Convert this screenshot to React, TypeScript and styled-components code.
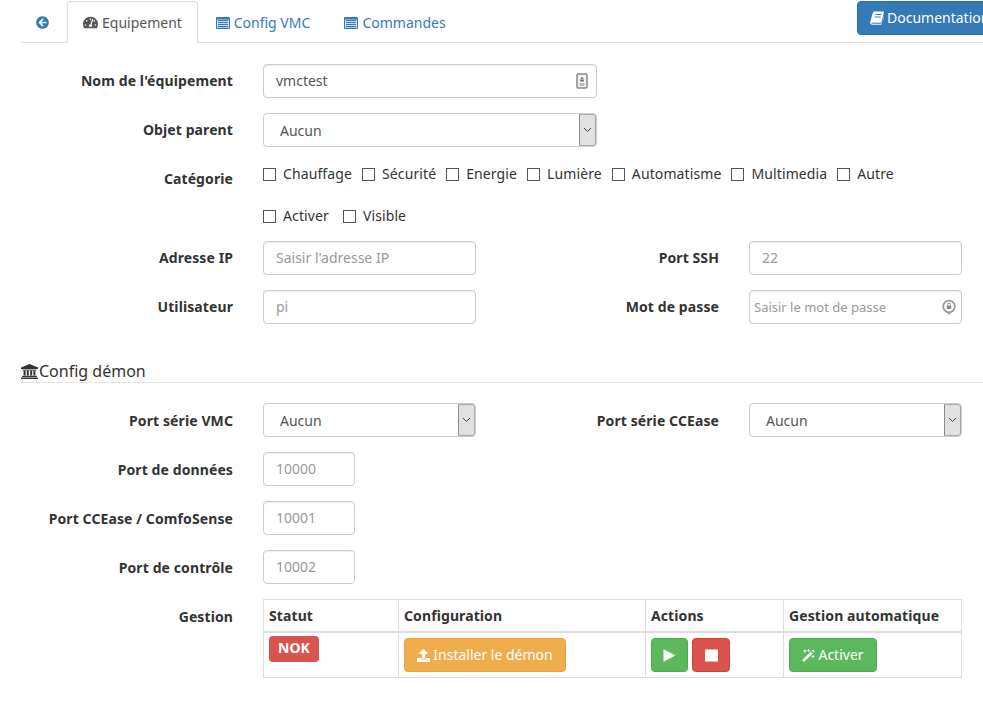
import React from "react";
import styled, { createGlobalStyle } from "styled-components";
import { FaArrowCircleLeft, FaTachometerAlt, FaUpload } from "react-icons/fa";

const Global = createGlobalStyle`
  html, body { margin: 0; padding: 0; background: #fff; overflow: hidden; height: 708px; }
  body { font-family: "Noto Sans", "Liberation Sans", sans-serif; font-size: 14px; color: #333; line-height: 20px; }
  * { box-sizing: border-box; }
`;

const Page = styled.div`
  width: 983px;
  height: 708px;
  padding-left: 21px;
  overflow: hidden;
`;
const TabBar = styled.div`
  display: flex;
  height: 43px;
  border-bottom: 1px solid #ddd;
  width: 962px;
  flex-wrap: nowrap;
`;
const Tabs = styled.div`
  display: flex;
  width: 836px;
  flex-shrink: 0;
  padding-top: 1px;
`;
const Tab = styled.a<{ $active?: boolean; $w: number }>`
  width: ${p => p.$w}px;
  height: 42px;
  display: flex;
  align-items: center;
  justify-content: center;
  gap: 4px;
  padding-top: 1px;
  color: ${p => (p.$active ? "#555" : "#337ab7")};
  border: 1px solid ${p => (p.$active ? "#ddd" : "transparent")};
  border-bottom-color: ${p => (p.$active ? "#fff" : "transparent")};
  border-radius: 4px 4px 0 0;
  background: ${p => (p.$active ? "#fff" : "transparent")};
  flex-shrink: 0;
  svg { flex-shrink: 0; }
`;
const BackTab = styled(Tab)`
  padding-right: 3px;
`;
const DocButton = styled.a`
  display: flex;
  align-items: center;
  gap: 3px;
  flex-shrink: 0;
  height: 34px;
  margin-top: 1px;
  padding: 0 12px;
  width: 150px;
  white-space: nowrap;
  background: #337ab7;
  border: 1px solid #2e6da4;
  color: #fff;
  border-radius: 4px;
`;
const Form = styled.div`
  display: flex;
  flex-direction: column;
  padding-top: 21px;
  margin-left: -21px;
`;
const Row = styled.div<{ $mb?: number }>`
  display: flex;
  align-items: flex-start;
  margin-bottom: ${p => p.$mb ?? 15}px;
`;
const Label = styled.label<{ $second?: boolean; $pt?: number }>`
  flex-shrink: 0;
  width: ${p => (p.$second ? 243 : 233)}px;
  margin-right: 30px;
  padding-top: ${p => p.$pt ?? 7}px;
  text-align: right;
  font-weight: 700;
  letter-spacing: 0.1px;
  white-space: nowrap;
`;
const Field = styled.div<{ $w: number }>`
  position: relative;
  flex-shrink: 0;
  width: ${p => p.$w}px;
  height: 34px;
  padding: 0 12px;
  display: flex;
  align-items: center;
  border: 1px solid #ccc;
  border-radius: 4px;
  color: #555;
  background: #fff;
  box-shadow: inset 0 1px 1px rgba(0, 0, 0, 0.075);
`;
const Placeholder = styled.span<{ $small?: boolean }>`
  color: #999;
  font-size: ${p => (p.$small ? 13 : 14)}px;
  margin-left: ${p => (p.$small ? -8 : 0)}px;
  white-space: nowrap;
`;
const FieldIcon = styled.svg<{ $r: number; $t: number }>`
  position: absolute;
  right: ${p => p.$r}px;
  top: ${p => p.$t}px;
`;
const SelectBox = styled.div<{ $w: number }>`
  flex-shrink: 0;
  width: ${p => p.$w}px;
  height: 34px;
  display: flex;
  align-items: stretch;
  border: 1px solid #ccc;
  border-radius: 4px;
  color: #555;
  background: #fff;
  overflow: hidden;
`;
const SelectText = styled.span`
  flex: 1;
  padding: 7px 0 0 16px;
`;
const SelectArrow = styled.span`
  width: 17px;
  flex-shrink: 0;
  display: flex;
  align-items: center;
  justify-content: center;
  background: #e1e1e1;
  border: 1px solid #a9a9a9;
  border-left-color: #8c8c8c;
  border-radius: 0 3px 3px 0;
`;
const Checks = styled.div`
  display: flex;
  flex-direction: column;
  padding-top: 1px;
`;
const CheckLine = styled.div<{ $h: number; $gap: number }>`
  display: flex;
  height: ${p => p.$h}px;
  gap: ${p => p.$gap}px;
`;
const Check = styled.label`
  display: flex;
  align-items: flex-start;
  gap: 7px;
  letter-spacing: 0.11px;
  white-space: nowrap;
  &::before {
    content: "";
    box-sizing: border-box;
    width: 13px;
    height: 13px;
    margin-top: 4px;
    border: 1px solid #555;
    background: #fff;
    flex-shrink: 0;
  }
`;
const Legend = styled.div`
  margin: 36px 0 20px 21px;
  height: 23px;
  display: flex;
  align-items: flex-start;
  gap: 1px;
  font-size: 16px;
  line-height: 22px;
  color: #333;
  border-bottom: 1px solid #e5e5e5;
  svg { margin-top: 4px; }
`;
const Table = styled.table`
  border-collapse: collapse;
  table-layout: fixed;
  width: 698px;
  th, td {
    border: 1px solid #ddd;
    padding: 5px;
    text-align: left;
    vertical-align: top;
  }
  th { height: 32px; border-bottom-width: 2px; font-weight: 700; letter-spacing: 0.1px; line-height: 20px; padding-top: 6px; }
  td { height: 45px; padding-bottom: 4px; }
`;
const Badge = styled.span`
  display: inline-block;
  width: 50px;
  height: 26px;
  margin-top: -2px;
  background: #d9534f;
  color: #fff;
  border-radius: 4px;
  font-weight: 700;
  font-size: 14px;
  line-height: 24px;
  text-align: center;
`;
const ActionButton = styled.a<{ $bg: string; $bd: string; $w: number }>`
  display: flex;
  align-items: center;
  justify-content: center;
  gap: 3px;
  width: ${p => p.$w}px;
  height: 34px;
  background: ${p => p.$bg};
  border: 1px solid ${p => p.$bd};
  border-radius: 4px;
  color: #fff;
  white-space: nowrap;
`;
const ButtonGroup = styled.div`
  display: flex;
  gap: 4px;
`;

const ListIcon = () => (
  <svg width="14" height="12" viewBox="0 0 14 12">
    <rect x="0" y="0" width="14" height="12" rx="1" fill="currentColor" />
    <path d="M1.2 2.6h11.6v8.2H1.2z" fill="#fff" />
    <path d="M2 3.6h10M2 5.6h10M2 7.6h10M2 9.6h10" stroke="currentColor" strokeWidth="1.1" />
  </svg>
);

const BookIcon = () => (
  <svg width="14" height="14" viewBox="0 0 14 14" fill="#fff">
    <path fillRule="evenodd" d="M4.2 0.6h9.2c.4 0 .6.3.5.7l-2.4 9.6c-.2.6-.6.9-1.2.9H2.4c-.6 0-.9.2-.9.5s.3.5.8.5h8.6c.6 0 1-.3 1.2-.8l2-8v1.6l-2 7c-.2.7-.7 1.1-1.3 1.1H2.2C1 13.7.1 12.8.1 11.6c0-.3 0-.5.1-.8L3 1.5C3.2 1 3.6.6 4.2.6zM5.6 3l-.3 1h6l.3-1zM4.9 5.4l-.3 1h6l.3-1z" />
  </svg>
);

const BankIcon = () => (
  <svg width="17" height="15" viewBox="0 0 17 15" fill="#333">
    <path d="M8.5 0L17 3.4V5H0V3.4z" />
    <path d="M1.5 5.6h14v.9h-14z" />
    <path d="M2.6 6.5h2v5h-2zM5.8 6.5h2v5h-2zM9.2 6.5h2v5h-2zM12.4 6.5h2v5h-2z" />
    <path d="M1.2 11.8h14.6V13H1.2zM0 13.4h17V15H0z" />
  </svg>
);

const PlayIcon = () => (
  <svg width="13" height="13" viewBox="0 0 13 13" fill="#fff">
    <path d="M0.5 0.3L12.5 6.5 0.5 12.7z" />
  </svg>
);

const StopIcon = () => (
  <svg width="13" height="13" viewBox="0 0 13 13" fill="#fff">
    <rect x="0" y="0.5" width="13" height="12" />
  </svg>
);

const WandIcon = () => (
  <svg width="13" height="13" viewBox="0 0 13 13" fill="#fff">
    <path d="M0 11.2L8.8 2.6l1.9 1.9L2 13z" />
    <path d="M9.8 1.6l1-1 1.9 1.9-1 1z" />
    <path d="M2.4 0.6h1v1h1v1h-1v1h-1v-1h-1v-1h1zM6 0h.9v.9h.9v.9h-.9v.9H6v-.9h-.9V.9H6zM10.6 6.2h.9v.9h.9V8h-.9v.9h-.9V8h-.9v-.9h.9z" />
  </svg>
);

const Select = ({ w }: { w: number }) => (
  <SelectBox $w={w}>
    <SelectText>Aucun</SelectText>
    <SelectArrow>
      <svg width="9" height="6" viewBox="0 0 9 6" fill="none" stroke="#444" strokeWidth="1">
        <path d="M1 1l3.5 3.5L8 1" />
      </svg>
    </SelectArrow>
  </SelectBox>
);

const row1 = ["Chauffage", "Sécurité", "Energie", "Lumière", "Automatisme", "Multimedia", "Autre"];

export default function App() {
  return (
    <Page>
      <Global />
      <TabBar>
        <Tabs>
          <BackTab $w={46}><FaArrowCircleLeft size={13} /></BackTab>
          <Tab $active $w={131}><FaTachometerAlt size={15} />Equipement</Tab>
          <Tab $w={130}><ListIcon />Config VMC</Tab>
          <Tab $w={134}><ListIcon />Commandes</Tab>
        </Tabs>
        <DocButton><BookIcon />Documentation</DocButton>
      </TabBar>
      <Form>
        <Row>
          <Label>Nom de l'équipement</Label>
          <Field $w={334}>
            vmctest
            <FieldIcon $r={8} $t={8} width="12" height="16" viewBox="0 0 12 16">
              <rect x="1" y="1" width="10" height="14" rx="1" fill="#f2f2f2" stroke="#888" strokeWidth="1.5" />
              <path d="M6 3.5l2 3H4z" fill="#777" />
              <rect x="4" y="7" width="4" height="1.5" fill="#777" />
              <rect x="3.5" y="10" width="5" height="3" fill="#bbb" />
            </FieldIcon>
          </Field>
        </Row>
        <Row $mb={16}>
          <Label>Objet parent</Label>
          <Select w={334} />
        </Row>
        <Row $mb={0}>
          <Label $pt={6}>Catégorie</Label>
          <Checks>
            <CheckLine $h={42} $gap={10}>
              {row1.map(t => <Check key={t}>{t}</Check>)}
            </CheckLine>
            <CheckLine $h={35} $gap={14}>
              <Check>Activer</Check>
              <Check>Visible</Check>
            </CheckLine>
          </Checks>
        </Row>
        <Row>
          <Label>Adresse IP</Label>
          <Field $w={213}><Placeholder>Saisir l'adresse IP</Placeholder></Field>
          <Label $second>Port SSH</Label>
          <Field $w={213}><Placeholder>22</Placeholder></Field>
        </Row>
        <Row $mb={0}>
          <Label>Utilisateur</Label>
          <Field $w={213}><Placeholder>pi</Placeholder></Field>
          <Label $second>Mot de passe</Label>
          <Field $w={213}>
            <Placeholder $small>Saisir le mot de passe</Placeholder>
            <FieldIcon $r={5} $t={8} width="14" height="16" viewBox="0 0 14 16">
              <circle cx="7" cy="7.5" r="5.8" fill="none" stroke="#999" strokeWidth="1.8" />
              <rect x="4.8" y="6.5" width="4.4" height="3.6" rx=".6" fill="#888" />
              <path d="M5.6 6.5V5.4a1.4 1.4 0 0 1 2.8 0v1.1" fill="none" stroke="#888" />
              <path d="M7 16l-2-2.6h4z" fill="#999" />
            </FieldIcon>
          </Field>
        </Row>
        <Legend><BankIcon />Config démon</Legend>
        <Row>
          <Label $pt={8}>Port série VMC</Label>
          <Select w={213} />
          <Label $second $pt={8}>Port série CCEase</Label>
          <Select w={213} />
        </Row>
        <Row>
          <Label $pt={8}>Port de données</Label>
          <Field $w={92}><Placeholder>10000</Placeholder></Field>
        </Row>
        <Row>
          <Label $pt={8}>Port CCEase / ComfoSense</Label>
          <Field $w={92}><Placeholder>10001</Placeholder></Field>
        </Row>
        <Row>
          <Label $pt={8}>Port de contrôle</Label>
          <Field $w={92}><Placeholder>10002</Placeholder></Field>
        </Row>
        <Row>
          <Label $pt={8}>Gestion</Label>
          <Table>
            <colgroup>
              <col width="135" /><col width="247" /><col width="138" /><col width="178" />
            </colgroup>
            <thead>
              <tr><th>Statut</th><th>Configuration</th><th>Actions</th><th>Gestion automatique</th></tr>
            </thead>
            <tbody>
              <tr>
                <td><Badge>NOK</Badge></td>
                <td><ActionButton $bg="#f0ad4e" $bd="#eea236" $w={162}><FaUpload size={13} />Installer le démon</ActionButton></td>
                <td>
                  <ButtonGroup>
                    <ActionButton $bg="#5cb85c" $bd="#4cae4c" $w={37}><PlayIcon /></ActionButton>
                    <ActionButton $bg="#d9534f" $bd="#d43f3a" $w={38}><StopIcon /></ActionButton>
                  </ButtonGroup>
                </td>
                <td><ActionButton $bg="#5cb85c" $bd="#4cae4c" $w={88}><WandIcon />Activer</ActionButton></td>
              </tr>
            </tbody>
          </Table>
        </Row>
      </Form>
    </Page>
  );
}
